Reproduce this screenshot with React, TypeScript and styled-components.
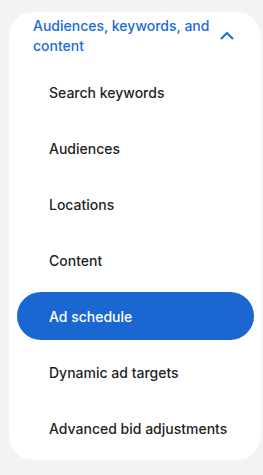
import React from "react";
import styled, { createGlobalStyle } from "styled-components";

const Global = createGlobalStyle`
  html, body { margin: 0; padding: 0; background: #f1f3f4; }
  body { font-family: Inter, "Noto Sans", sans-serif; -webkit-font-smoothing: antialiased; }
`;

const Page = styled.div`
  padding: 12px 2px 15px 9px;
  min-height: 475px;
  box-sizing: border-box;
`;

const Card = styled.div`
  background: #ffffff;
  border-radius: 24px;
  padding: 0 8px 8px 8px;
  display: flex;
  flex-direction: column;
`;

const Header = styled.div`
  display: flex;
  align-items: center;
  justify-content: space-between;
  padding: 0 18px 0 16px;
  height: 48px;
`;

const HeaderTitle = styled.div`
  color: #1a6bd9;
  font-size: 14px;
  font-weight: 500;
  line-height: 20px;
  max-width: 185px;
`;

const List = styled.div`
  display: flex;
  flex-direction: column;
  gap: 8px;
  margin-top: 8px;
`;

const Item = styled.div<{ $active?: boolean }>`
  height: 48px;
  display: flex;
  align-items: center;
  padding-left: 32px;
  border-radius: 24px;
  font-size: 14px;
  font-weight: 500;
  color: ${(p) => (p.$active ? "#ffffff" : "#1f1f1f")};
  background: ${(p) => (p.$active ? "#1a67d2" : "transparent")};
  margin-right: -1px;
`;

const Chevron = () => (
  <svg width="16" height="10" viewBox="0 0 16 10" fill="none">
    <path d="M2 8 L8 2 L14 8" stroke="#1a6bd9" strokeWidth="2" />
  </svg>
);

const items = [
  "Search keywords",
  "Audiences",
  "Locations",
  "Content",
  "Ad schedule",
  "Dynamic ad targets",
  "Advanced bid adjustments",
];

export default function App() {
  return (
    <>
      <Global />
      <Page>
        <Card>
          <Header>
            <HeaderTitle>Audiences, keywords, and content</HeaderTitle>
            <Chevron />
          </Header>
          <List>
            {items.map((t) => (
              <Item key={t} $active={t === "Ad schedule"}>
                {t}
              </Item>
            ))}
          </List>
        </Card>
      </Page>
    </>
  );
}
